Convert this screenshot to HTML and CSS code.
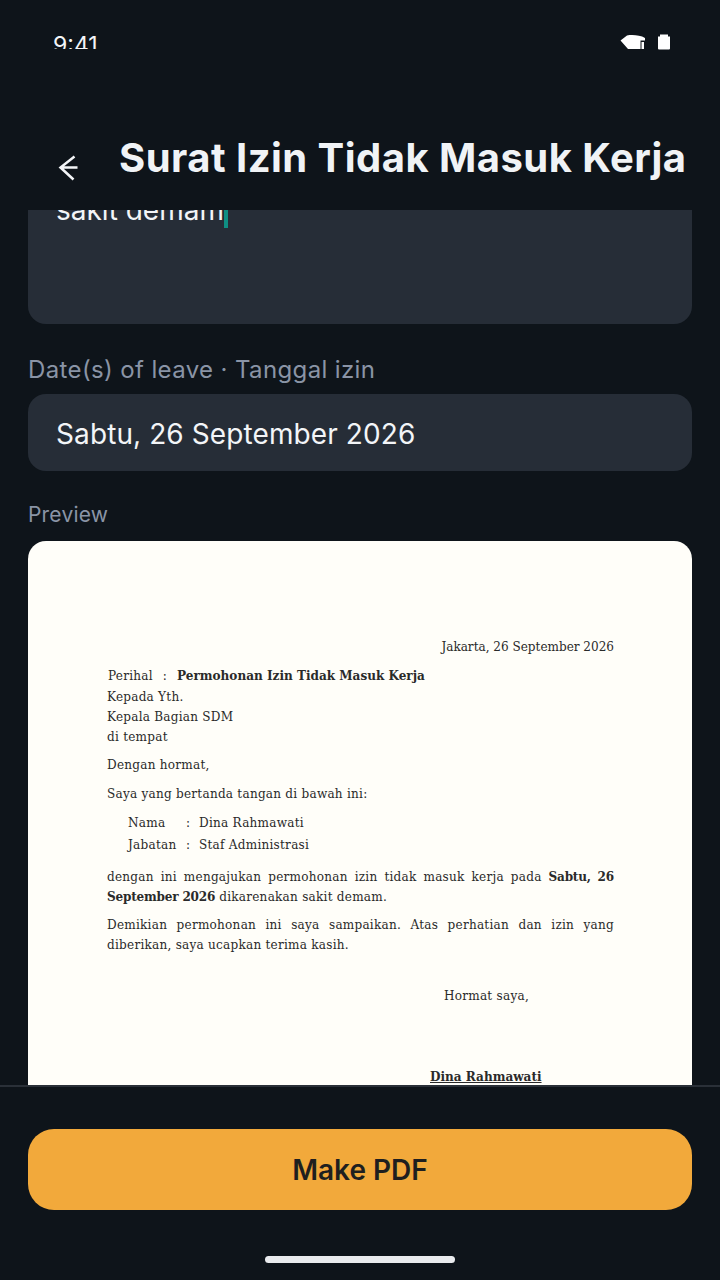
FILE: index.html
```html
<!DOCTYPE html>
<html lang="id">
<head>
<meta charset="utf-8">
<title>Surat Izin Tidak Masuk Kerja</title>
<link rel="stylesheet" href="styles.css">
</head>
<body>
<div class="app">
  <div class="status">
    <span class="time">9:41</span>
    <span class="status-icons">
      <svg class="wifi" viewBox="0 0 26 16" width="26" height="16"><path d="M0.500 6.500 L7 1.500 C12 0.500 20 1 25 4 L25 6.500 L20.500 6.500 L20.500 15 L8 15 Z" fill="#fff"/><rect x="21.500" y="8" width="2.500" height="7" fill="#fff"/></svg>
      <svg class="battery" viewBox="0 0 14 16" width="14" height="16"><path d="M3 0.500 H11 V2.500 H13 V14.500 A1 1 0 0 1 12 15.500 H2 A1 1 0 0 1 1 14.500 V2.500 H3 Z" fill="#fff"/></svg>
    </span>
  </div>
  <header class="topbar">
    <svg class="back" viewBox="0 0 24 28" width="24" height="28"><path d="M21.500 13.500 H4.500 M18.500 2.500 L4.500 13.500 L17.500 25.500" fill="none" stroke="#f3f5f8" stroke-width="2.500"/></svg>
    <h1 class="title">Surat Izin Tidak Masuk Kerja</h1>
  </header>
  <main class="scroll">
    <div class="content">
      <div class="textarea"><span class="ta-text">sakit demam</span><span class="caret"></span></div>
      <label class="label label-date">Date(s) of leave · Tanggal izin</label>
      <div class="input">Sabtu, 26 September 2026</div>
      <label class="label label-preview">Preview</label>
      <article class="paper">
        <p class="date">Jakarta, 26 September 2026</p>
        <div class="perihal"><span>Perihal</span><span class="colon">:</span><strong>Permohonan Izin Tidak Masuk Kerja</strong></div>
        <p class="addr">Kepada Yth.<br>Kepala Bagian SDM<br>di tempat</p>
        <p class="para">Dengan hormat,</p>
        <p class="para para-wide">Saya yang bertanda tangan di bawah ini:</p>
        <div class="idents">
          <span>Nama</span><span>:</span><span>Dina Rahmawati</span>
          <span>Jabatan</span><span>:</span><span>Staf Administrasi</span>
        </div>
        <p class="just">dengan ini mengajukan permohonan izin tidak masuk kerja pada <strong class="tight">Sabtu, 26 September 2026</strong> dikarenakan sakit demam.</p>
        <p class="just">Demikian permohonan ini saya sampaikan. Atas perhatian dan izin yang diberikan, saya ucapkan terima kasih.</p>
        <div class="sign">
          <p class="regards">Hormat saya,</p>
          <p class="signer">Dina Rahmawati</p>
        </div>
      </article>
    </div>
  </main>
  <footer class="footer">
    <button class="cta">Make PDF</button>
    <div class="home"></div>
  </footer>
</div>
</body>
</html>
```
FILE: styles.css
```css
* { box-sizing: border-box; }
html, body { margin: 0; padding: 0; background: #0e141a; }
.app { width: 720px; height: 1280px; display: flex; flex-direction: column; background: #0e141a; font-family: Inter, sans-serif; overflow: hidden; }
.status { height: 84px; flex: none; display: flex; justify-content: space-between; align-items: flex-start; padding: 34px 49px 0 53px; }
.time { display: block; font-size: 23px; line-height: 23px; height: 15px; overflow: hidden; color: #f3f5f8; }
.status-icons { display: flex; align-items: center; gap: 11px; }
.topbar { height: 126px; flex: none; display: flex; align-items: flex-start; padding: 0 0 0 56px; }
.back { margin-top: 70px; flex: none; }
.title { margin: 48px 0 0 39px; font: 700 40px/52px Inter, sans-serif; color: #f0f3f6; white-space: nowrap; letter-spacing: 0.46px; }
.scroll { flex: 1; min-height: 0; overflow: hidden; }
.content { padding: 0 28px; margin-top: -40px; }
.textarea { height: 154px; background: #262d37; border-radius: 0 0 18px 18px; padding: 20px 28px 0; font-size: 28px; line-height: 40px; color: #f3f5f8; display: flex; align-items: flex-start; }
.caret { width: 4px; height: 36px; background: #0f8f83; margin-top: 2px; }
.label { display: block; color: #8a94a6; font-size: 24px; line-height: 32px; letter-spacing: 0.37px; }
.label-date { margin-top: 30px; }
.input { margin-top: 8px; height: 77px; background: #262d37; border-radius: 18px; padding: 2px 28px 0; display: flex; align-items: center; color: #f3f5f8; font-size: 28px; letter-spacing: 0.1px; }
.label-preview { margin-top: 28px; font-size: 21px; letter-spacing: 0.2px; }
.paper { margin-top: 10px; background: #fffef9; border-radius: 18px 18px 0 0; padding: 96px 78px 0 79px; height: 600px; color: #2a2a2a; font-family: "DejaVu Serif Condensed", "DejaVu Serif", serif; font-size: 13.4px; line-height: 20px; letter-spacing: 0.25px; }
.paper strong { letter-spacing: 0; line-height: 1; }
.paper strong.tight { letter-spacing: -0.2px; }
.paper p { margin: 0; }
.date { text-align: right; letter-spacing: 0; }
.perihal { margin-top: 9px; padding-left: 1px; display: flex; align-items: baseline; }
.colon { margin: 0 10px; }
.addr { margin-top: 1px !important; }
.para { margin-top: 8px !important; }
.para-wide { margin-top: 9px !important; }
.idents { margin: 9px 0 0 21px; display: grid; grid-template-columns: 58px 13px auto; grid-auto-rows: 22px; justify-content: start; }
.just { margin-top: 8px !important; text-align: justify; }
.idents + .just { margin-top: 10px !important; }
.sign { margin: 31px 0 0 322px; }
.regards { padding-left: 15px; }
.signer { margin-top: 60px !important; padding-left: 1px; font-weight: 700; letter-spacing: 0; text-decoration: underline; }
.footer { height: 195px; flex: none; border-top: 2px solid #2a3038; padding: 42px 28px 0; display: flex; flex-direction: column; align-items: center; }
.cta { width: 100%; height: 81px; border: 0; border-radius: 26px; background: #f2a93b; color: #1f1f1f; font: 600 28px Inter, sans-serif; }
.home { margin-top: 46px; width: 190px; height: 7px; background: #e9ebee; border-radius: 4px; }
```
